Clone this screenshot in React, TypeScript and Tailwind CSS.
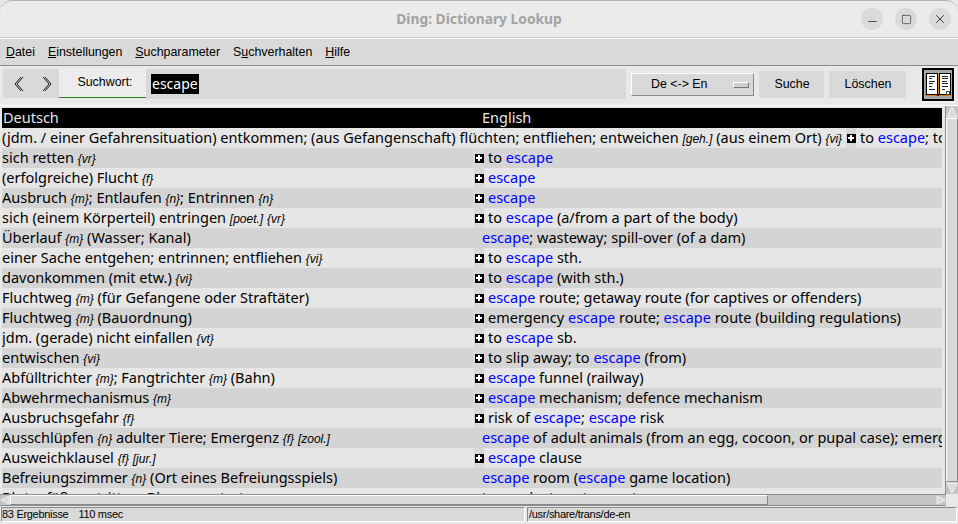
import { Minus, Square, X } from "lucide-react";

type Row = { de: string; en: string; more?: boolean; wide?: boolean };

const rows: Row[] = [
  { de: "(jdm. / einer Gefahrensituation) entkommen; (aus Gefangenschaft) flüchten; entfliehen; entweichen [geh.] (aus einem Ort) {vi}", en: "to escape; to escape", more: true, wide: true },
  { de: "sich retten {vr}", en: "to escape", more: true },
  { de: "(erfolgreiche) Flucht {f}", en: "escape", more: true },
  { de: "Ausbruch {m}; Entlaufen {n}; Entrinnen {n}", en: "escape", more: true },
  { de: "sich (einem Körperteil) entringen [poet.] {vr}", en: "to escape (a/from a part of the body)", more: true },
  { de: "Überlauf {m} (Wasser; Kanal)", en: "escape; wasteway; spill-over (of a dam)" },
  { de: "einer Sache entgehen; entrinnen; entfliehen {vi}", en: "to escape sth.", more: true },
  { de: "davonkommen (mit etw.) {vi}", en: "to escape (with sth.)", more: true },
  { de: "Fluchtweg {m} (für Gefangene oder Straftäter)", en: "escape route; getaway route (for captives or offenders)", more: true },
  { de: "Fluchtweg {m} (Bauordnung)", en: "emergency escape route; escape route (building regulations)", more: true },
  { de: "jdm. (gerade) nicht einfallen {vt}", en: "to escape sb.", more: true },
  { de: "entwischen {vi}", en: "to slip away; to escape (from)", more: true },
  { de: "Abfülltrichter {m}; Fangtrichter {m} (Bahn)", en: "escape funnel (railway)", more: true },
  { de: "Abwehrmechanismus {m}", en: "escape mechanism; defence mechanism", more: true },
  { de: "Ausbruchsgefahr {f}", en: "risk of escape; escape risk", more: true },
  { de: "Ausschlüpfen {n} adulter Tiere; Emergenz {f} [zool.]", en: "escape of adult animals (from an egg, cocoon, or pupal case); emergence" },
  { de: "Ausweichklausel {f} [jur.]", en: "escape clause", more: true },
  { de: "Befreiungszimmer {n} (Ort eines Befreiungsspiels)", en: "escape room (escape game location)" },
  { de: "Blutgefäß austritten; Blasen austreten", en: "to exude; to extravasate" },
];

const menus = [
  ["", "D", "atei"],
  ["", "E", "instellungen"],
  ["", "S", "uchparameter"],
  ["S", "u", "chverhalten"],
  ["", "H", "ilfe"],
];

function German({ text }: { text: string }) {
  return (
    <>
      {text.split(/(\{[a-z]+\}|\[[a-z.]+\])/).map((part, i) =>
        /^[{[]/.test(part) ? (
          <i key={i} className="font-['Liberation_Sans',sans-serif] text-[12px]">{part}</i>
        ) : (
          <span key={i}>{part}</span>
        ),
      )}
    </>
  );
}

function English({ text }: { text: string }) {
  return (
    <>
      {text.split(/(escape)/).map((part, i) =>
        part === "escape" ? <span key={i} className="text-[#0000ff]">{part}</span> : <span key={i}>{part}</span>,
      )}
    </>
  );
}

function PlusBox() {
  return (
    <span className="flex w-[10px] shrink-0 items-center justify-center">
      <svg width="9" height="9" viewBox="0 0 9 9" shapeRendering="crispEdges">
        <rect width="9" height="9" fill="#000" />
        <rect x="3" y="1" width="2" height="6" fill="#fff" />
        <rect x="1" y="3" width="6" height="2" fill="#fff" />
      </svg>
    </span>
  );
}

function BookIcon() {
  return (
    <svg width="34" height="36" viewBox="0 0 34 36" shapeRendering="crispEdges">
      <rect width="34" height="36" fill="#f2f2f2" />
      <rect x="1" y="1" width="32" height="33" fill="#000" />
      <rect x="3" y="3" width="28" height="29" fill="#a8a8a8" />
      <rect x="4" y="8" width="26" height="21" fill="#e07a10" />
      <rect x="5" y="6" width="11" height="21" fill="#fff" stroke="#000" />
      <rect x="18" y="6" width="11" height="21" fill="#fff" stroke="#000" />
      <path d="M8 9h6M8 11h3M8 14h6M8 16h4M8 19h3M8 22h6M21 9h6M21 11h6M21 14h5M21 16h6M21 19h6M21 22h3" stroke="#222" fill="none" />
      <rect x="25" y="24" width="4" height="4" fill="#444" />
      <rect x="26" y="25" width="2" height="2" fill="#fff" />
      <rect x="16" y="27" width="2" height="2" fill="#000" />
    </svg>
  );
}

export default function App() {
  return (
    <div className="flex h-[524px] w-[958px] flex-col overflow-hidden bg-[#e8e8e8] font-['Liberation_Sans',sans-serif] text-[12.4px] text-black">
      {/* title bar */}
      <div className="relative flex h-[38px] shrink-0 items-center justify-end gap-3 rounded-t-[12px] border-t border-b border-t-[#b4b4b4] border-b-[#c6c6c6] bg-[#ebebeb] pr-[7px]">
        <span className="absolute inset-x-0 text-center font-['Noto_Sans',sans-serif] text-[13.8px] font-bold text-[#a3a3a3]">
          Ding: Dictionary Lookup
        </span>
        <span className="relative flex h-[22px] w-[22px] items-center justify-center rounded-full bg-[#dadada]">
          <Minus size={13} strokeWidth={1.6} color="#333" className="translate-y-[2px]" />
        </span>
        <span className="relative flex h-[22px] w-[22px] items-center justify-center rounded-full bg-[#dadada]">
          <Square size={11} strokeWidth={1.5} color="#333" />
        </span>
        <span className="relative flex h-[22px] w-[22px] items-center justify-center rounded-full bg-[#dadada]">
          <X size={14} strokeWidth={1.6} color="#333" />
        </span>
      </div>

      {/* menu */}
      <div className="flex h-[28px] shrink-0 items-center gap-[13px] border-t border-b border-t-white border-b-[#8c8c8c] bg-[#d9d9d9] pl-[6px]">
        {menus.map((m) => (
          <span key={m.join("")}>
            {m[0]}
            <span className="underline">{m[1]}</span>
            {m[2]}
          </span>
        ))}
      </div>

      {/* toolbar */}
      <div className="flex h-[39px] shrink-0 items-start pl-[3px] pr-[3px]">
        <div className="mt-[3px] flex h-[29px] w-[56px] items-center gap-[13px] bg-[#d9d9d9] pl-[10px]">
          <svg width="14" height="16" viewBox="0 0 14 16" fill="none" stroke="#000">
            <path d="M8 1 2 8l6 7M10 1 4 8l6 7" strokeWidth="0.9" />
          </svg>
          <svg width="14" height="16" viewBox="0 0 14 16" fill="none" stroke="#000">
            <path d="M3 1l6 7-6 7M5 1l6 7-6 7" strokeWidth="0.9" />
          </svg>
        </div>
        <div className="mt-[3px] flex h-[29px] w-[87px] items-center justify-center border-b border-b-[#2e7d20] bg-[#ececec] pb-[2px] pl-[5px]">
          Suchwort:
        </div>
        <div className="mt-[3px] flex h-[30px] w-[480px] items-center bg-[#d9d9d9] pl-[5px] font-['Noto_Sans',sans-serif] text-[14px]">
          <span className="bg-black px-[1px] leading-[20px] text-white">escape</span>
        </div>
        <div className="ml-[5px] mt-[7px] flex h-[23px] w-[123px] items-center border border-t-white border-l-white border-b-[#8a8a8a] border-r-[#8a8a8a] bg-[#d9d9d9] pl-[19px]">
          <span className="w-[82px]">De &lt;-&gt; En</span>
          <span className="h-[6px] w-[16px] border border-t-white border-l-white border-b-[#777] border-r-[#777] bg-[#cfcfcf]" />
        </div>
        <div className="ml-[5px] mt-[5px] flex h-[27px] w-[65px] items-center justify-center bg-[#d9d9d9] pl-[1px]">Suche</div>
        <div className="ml-[5px] mt-[5px] flex h-[27px] w-[77px] items-center justify-center bg-[#d9d9d9] pl-[1px]">Löschen</div>
        <div className="ml-[15px] mt-[1px]">
          <BookIcon />
        </div>
      </div>

      {/* results */}
      <div className="flex min-h-0 flex-1 border-t border-t-white">
        <div className="min-w-0 flex-1 overflow-hidden pl-[2px] pt-[2px] font-['Noto_Sans',sans-serif] text-[14.5px] leading-[19px]">
          <div className="flex h-[20px] w-[940px] bg-black text-[#e8e8e8]">
            <span className="w-[480px] pl-[1px]">Deutsch</span>
            <span>English</span>
          </div>
          {rows.map((row, i) => {
            const tone = i % 2 === 0 ? "bg-[#e6e6e6]" : "bg-[#d4d4d4]";
            return (
              <div key={row.de} className="flex h-[20px] w-[940px] overflow-hidden whitespace-nowrap bg-[#d9d9d9]">
                <div className={`${row.wide ? "w-[844px]" : "w-[472px]"} shrink-0 ${tone}`}>
                  <German text={row.de} />
                </div>
                {row.more ? (
                  <>
                    <PlusBox />
                    <div className={`min-w-0 flex-1 overflow-hidden pl-[4px] ${tone}`}>
                      <English text={row.en} />
                    </div>
                  </>
                ) : (
                  <div className={`min-w-0 flex-1 overflow-hidden pl-[8px] ${tone}`}>
                    <English text={row.en} />
                  </div>
                )}
              </div>
            );
          })}
        </div>

        {/* vertical scrollbar */}
        <div className="flex w-[13px] shrink-0 flex-col border-l border-l-[#8c8c8c] bg-[#c4c4c4]">
          <svg width="12" height="12" viewBox="0 0 12 12" className="shrink-0">
            <path d="M6 1 11 11H1Z" fill="#d9d9d9" stroke="#f5f5f5" />
          </svg>
          <div className="flex-1 border border-t-white border-l-white border-b-[#8a8a8a] border-r-[#8a8a8a] bg-[#d9d9d9]" />
          <svg width="12" height="12" viewBox="0 0 12 12" className="shrink-0">
            <path d="M6 11 11 1H1Z" fill="#d9d9d9" stroke="#f5f5f5" />
          </svg>
        </div>
      </div>

      {/* horizontal scrollbar */}
      <div className="flex h-[12px] shrink-0 items-stretch">
        <div className="flex w-[946px] border-t border-b border-t-[#8c8c8c] border-b-[#8c8c8c] bg-[#c4c4c4]">
          <svg width="10" height="10" viewBox="0 0 10 10" className="shrink-0">
            <path d="M1 5 9 1v8Z" fill="#d9d9d9" stroke="#f5f5f5" />
          </svg>
          <div className="w-[758px] border border-t-white border-l-white border-b-[#8a8a8a] border-r-[#8a8a8a] bg-[#d9d9d9]" />
          <div className="flex-1" />
          <svg width="11" height="10" viewBox="0 0 11 10" className="shrink-0">
            <path d="M10 5 2 1v8Z" fill="#d9d9d9" stroke="#f5f5f5" />
          </svg>
        </div>
      </div>

      {/* status bar */}
      <div className="flex h-[18px] shrink-0 gap-[2px] px-[1px] pb-[2px] pt-[1px] text-[11px] tracking-[-0.3px]">
        <div className="flex w-[524px] items-center gap-[10px] border border-t-[#8a8a8a] border-l-[#8a8a8a] border-b-white border-r-white bg-[#d9d9d9]">
          <span>83 Ergebnisse</span>
          <span>110 msec</span>
        </div>
        <div className="flex flex-1 items-center border border-t-[#8a8a8a] border-l-[#8a8a8a] border-b-white border-r-white bg-[#d9d9d9] pl-[1px]">
          /usr/share/trans/de-en
        </div>
      </div>
    </div>
  );
}
